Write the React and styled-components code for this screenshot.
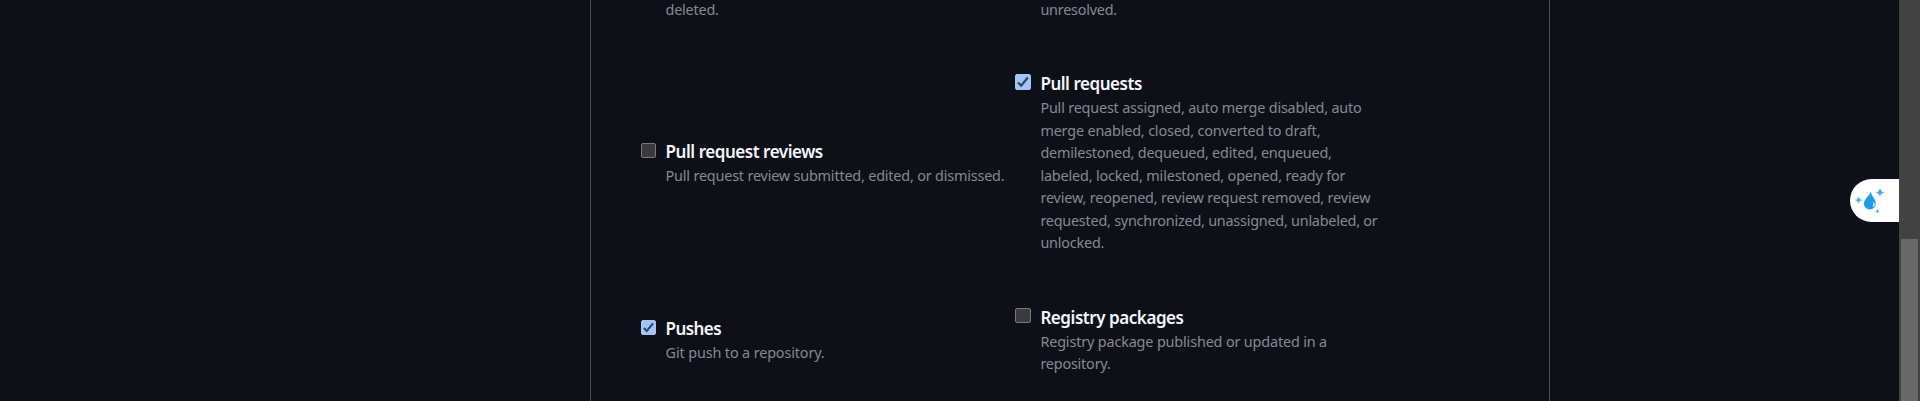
import React from "react";
import styled, { createGlobalStyle } from "styled-components";

const Global = createGlobalStyle`
  * { box-sizing: border-box; }
  html, body { margin: 0; padding: 0; background: #0d1117; overflow: hidden; }
`;

const Page = styled.div`
  display: flex;
  width: 1920px;
  height: 401px;
  overflow: hidden;
  background: #0d1117;
  color: #f5f8fb;
  font-family: "Noto Sans", "Open Sans", sans-serif;
`;

const Content = styled.main`
  position: relative;
  width: 1899px;
  padding-left: 590px;
`;

const Panel = styled.section`
  width: 960px;
  height: 401px;
  padding-left: 50px;
  border: solid #484c53;
  border-width: 0 1px;
`;

const Row = styled.div`
  display: grid;
  grid-template-columns: 374px 390px;
  grid-template-rows: ${(p) => p.$height}px;
  align-items: center;
  height: ${(p) => p.$height}px;
  margin-bottom: ${(p) => p.$gap || 0}px;
`;

const Event = styled.div`
  display: grid;
  grid-template-columns: 24.6px auto;
  align-items: start;
  &:nth-child(2) { grid-template-columns: 25.4px auto; }
`;

const Checkbox = styled.span`
  display: flex;
  width: ${(p) => p.$size || 15}px;
  height: ${(p) => p.$size || 15}px;
  margin-top: ${(p) => (p.$size ? 3 : 4)}px;
  border: 1px solid ${(p) => (p.$checked ? "#a0c5f8" : "#77797d")};
  border-radius: 2px;
  background: ${(p) => (p.$checked ? "#a0c5f8" : "#3b3b3d")};
  svg { width: 100%; height: 100%; }
`;

const Title = styled.h4`
  margin: 0;
  height: 26px;
  font-size: 17px;
  line-height: 25px;
  font-weight: 600;
  white-space: nowrap;
  letter-spacing: ${(p) => p.$track || -0.46}px;
`;

const Description = styled.p`
  grid-column: 2;
  margin: 0;
  color: #858a92;
  font-size: 14.4px;
  line-height: 22.45px;
`;

const Line = styled.span`
  display: block;
  white-space: nowrap;
  letter-spacing: ${(p) => p.$track || 0}px;
`;

const Assistant = styled.button`
  position: absolute;
  right: 0;
  top: 179px;
  width: 49px;
  height: 43px;
  padding: 0;
  border: 0;
  border-radius: 22px 0 0 22px;
  background: #fff;
  svg { display: block; }
`;

const ScrollTrack = styled.aside`
  width: 21px;
  height: 401px;
  padding: 239px 2px 0;
  background: #424242;
`;

const ScrollThumb = styled.div`
  height: 162px;
  background: #686868;
`;

function EventOption({ title, track, checked, size, lines }) {
  return (
    <Event>
      {title && (
        <>
          <Checkbox $checked={checked} $size={size}>
            {checked && (
              <svg viewBox="0 0 13 13" fill="none" stroke="#34455b" strokeWidth="2.1">
                <path d="M1.8 6.900 4.800 9.900 11 2.300" />
              </svg>
            )}
          </Checkbox>
          <Title $track={track}>{title}</Title>
        </>
      )}
      <Description>
        {lines.map(([text, t]) => (
          <Line key={text} $track={t}>{text}</Line>
        ))}
      </Description>
    </Event>
  );
}

export default function App() {
  return (
    <Page>
      <Global />
      <Content>
        <Panel>
          <Row $height={20} $gap={52}>
            <EventOption lines={[["deleted.", -0.22]]} />
            <EventOption lines={[["unresolved.", -0.22]]} />
          </Row>
          <Row $height={182} $gap={51}>
            <EventOption title="Pull request reviews" lines={[["Pull request review submitted, edited, or dismissed.", -0.185]]} />
            <EventOption
              title="Pull requests"
              checked
              size={16}
              lines={[
                ["Pull request assigned, auto merge disabled, auto", -0.19],
                ["merge enabled, closed, converted to draft,", -0.17],
                ["demilestoned, dequeued, edited, enqueued,", -0.2],
                ["labeled, locked, milestoned, opened, ready for", -0.16],
                ["review, reopened, review request removed, review", -0.16],
                ["requested, synchronized, unassigned, unlabeled, or", -0.23],
                ["unlocked.", -0.2],
              ]}
            />
          </Row>
          <Row $height={70}>
            <EventOption title="Pushes" track={-0.58} checked lines={[["Git push to a repository.", -0.13]]} />
            <EventOption
              title="Registry packages"
              track={-0.45}
              size={15.5}
              lines={[
                ["Registry package published or updated in a", -0.15],
                ["repository.", -0.2],
              ]}
            />
          </Row>
        </Panel>
        <Assistant aria-label="Assistant">
          <svg width="49" height="43" viewBox="0 0 49 43" fill="#1c9be6">
            <path d="M21 12.200C21 17 25.700 19.500 25.700 24.700a5.900 5.900 0 0 1-11.800 0C13.900 20 19.500 17 21 12.200Z" />
            <path d="M22.500 22.500q2 3.500-.5 5.500 3.500-.5 2.600-3.200Z" fill="#fff" />
            <path d="M30 9q.7 3.800 4.500 4.500-3.800.7-4.500 4.500-.7-3.800-4.500-4.500 3.800-.7 4.500-4.500Z" fill="#45aeea" />
            <path d="M8.600 17.500q.5 3 3.400 3.500-2.900.5-3.400 3.500-.5-3-3.400-3.500 2.900-.5 3.400-3.500Z" fill="#45aeea" />
            <path d="M27.500 30q.3 1.900 2.200 2.300-1.900.4-2.200 2.300-.3-1.900-2.200-2.300 1.900-.4 2.200-2.300Z" fill="#45aeea" />
          </svg>
        </Assistant>
      </Content>
      <ScrollTrack><ScrollThumb /></ScrollTrack>
    </Page>
  );
}
